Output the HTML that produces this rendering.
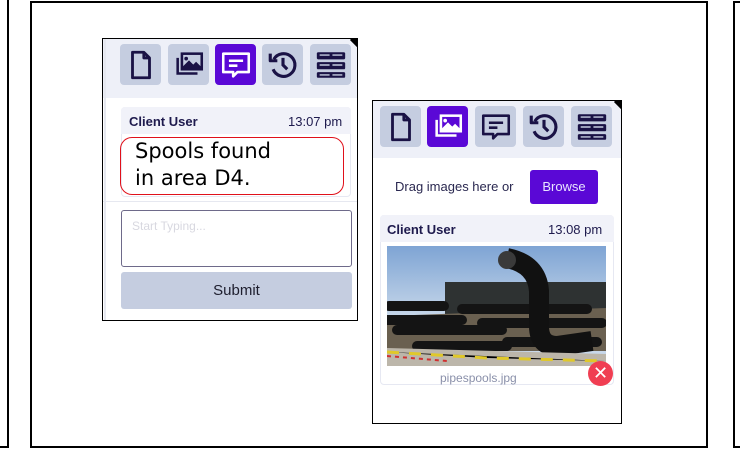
<!DOCTYPE html>
<html><head><meta charset="utf-8"><style>
*{box-sizing:border-box;margin:0;padding:0}
body{width:740px;height:450px;background:#fff;position:relative;overflow:hidden;font-family:"Liberation Sans",sans-serif}
.a{position:absolute}
.ic{position:absolute;width:41px;height:41px;border-radius:4px;background:#c5cde0;display:flex;align-items:center;justify-content:center}
.ic.on{background:#5a08d6}
.ic svg{width:34px;height:34px}
</style></head><body>
<div class="a" style="left:0;top:0;width:9px;height:448px;border-right:2px solid #000;border-bottom:2px solid #000"></div>
<div class="a" style="left:30px;top:1px;width:678px;height:447px;border:2px solid #000"></div>
<div class="a" style="left:733px;top:1px;width:20px;height:447px;border:2px solid #000"></div>

<!-- left panel -->
<div class="a" style="left:102px;top:38px;width:256px;height:283px;border:1px solid #000;background:#fff;overflow:hidden">
 <div class="a" style="left:0;top:0;width:256px;height:59px;background:#eef0f8"></div>
 <div class="a" style="left:249px;top:-4px;width:10px;height:10px;background:#000;transform:rotate(45deg)"></div>
 <div class="a" style="left:1px;top:0;width:2px;height:283px;background:#e6e8f0"></div>
</div>
<div class="ic" style="left:120px;top:44px"><svg viewBox="0 0 24 24" fill="none" stroke="#1a1245" stroke-width="2" stroke-linejoin="round"><path d="M6 3h8l4 4v14H6z"/><path d="M14 3v4h4"/></svg></div>
<div class="ic" style="left:168px;top:44px"><svg viewBox="0 0 24 24" fill="none" stroke="#1a1245" stroke-width="1.8"><rect x="7" y="4" width="14" height="11"/><path d="M4 7v11h14" /><path d="M8 14l4-4 3 3 2-2 3 3v1H8z" fill="#1a1245"/><circle cx="10" cy="7.5" r="1.3" fill="#1a1245" stroke="none"/></svg></div>
<div class="ic on" style="left:215px;top:44px"><svg viewBox="0 0 24 24" fill="none" stroke="#fff" stroke-width="1.8" stroke-linejoin="round"><path d="M3 4h18v13h-8l-3 3v-3H3z"/><path d="M7 9h10M7 12.5h6"/></svg></div>
<div class="ic" style="left:262px;top:44px"><svg viewBox="0 0 24 24" fill="none" stroke="#1a1245" stroke-width="2.2"><path d="M5.5 8A8 8 0 1 1 5 15"/><path d="M3 4v5h5" stroke-linejoin="round"/><path d="M12 7v5l3 3"/></svg></div>
<div class="ic" style="left:310px;top:44px"><svg viewBox="0 0 24 24" fill="#1a1245"><rect x="2" y="3" width="20" height="5" rx="1"/><rect x="2" y="10" width="20" height="5" rx="1"/><rect x="2" y="17" width="20" height="4" rx="1"/><path d="M4 5h7M13 5h7M4 12h7M13 12h7M4 19h7M13 19h7" stroke="#c5cde0" stroke-width="1"/></svg></div>

<div class="a" style="left:121px;top:107px;width:230px;height:90px;border:1px solid #e6e8f2;border-radius:4px;background:#fff"></div>
<div class="a" style="left:121px;top:107px;width:230px;height:27px;background:#f1f2f9;border-radius:4px 4px 0 0"></div>
<div class="a" style="left:129px;top:114px;font-size:13px;font-weight:bold;color:#1e1a4d">Client User</div>
<div class="a" style="left:288px;top:114px;font-size:13px;color:#1e1a4d">13:07 pm</div>
<div class="a" style="left:103px;top:201px;width:254px;height:1px;background:#e6e8f0"></div>
<div class="a" style="left:120px;top:137px;width:224px;height:58px;border:1px solid #e0101a;border-radius:12px"></div>
<div class="a" style="left:135px;top:138px;font-family:'DejaVu Sans',sans-serif;font-size:21px;line-height:27px;color:#000">Spools found<br>in area D4.</div>
<div class="a" style="left:121px;top:210px;width:231px;height:57px;border:1.5px solid #6e6a8a;border-radius:3px"></div>
<div class="a" style="left:132px;top:219px;font-size:12px;color:#d8d8e0">Start Typing...</div>
<div class="a" style="left:121px;top:272px;width:231px;height:37px;background:#c5cde0;border-radius:3px;text-align:center;line-height:37px;font-size:15px;color:#1e1e2e">Submit</div>

<!-- right panel -->
<div class="a" style="left:372px;top:100px;width:250px;height:324px;border:1px solid #000;background:#fff;overflow:hidden">
 <div class="a" style="left:0;top:0;width:250px;height:57px;background:#eef0f8"></div>
 <div class="a" style="left:243px;top:-4px;width:10px;height:10px;background:#000;transform:rotate(45deg)"></div>
</div>
<div class="ic" style="left:380px;top:106px"><svg viewBox="0 0 24 24" fill="none" stroke="#1a1245" stroke-width="2" stroke-linejoin="round"><path d="M6 3h8l4 4v14H6z"/><path d="M14 3v4h4"/></svg></div>
<div class="ic on" style="left:427px;top:106px"><svg viewBox="0 0 24 24" fill="none" stroke="#fff" stroke-width="1.8"><rect x="7" y="4" width="14" height="11"/><path d="M4 7v11h14"/><path d="M8 14l4-4 3 3 2-2 3 3v1H8z" fill="#fff"/><circle cx="10" cy="7.5" r="1.3" fill="#fff" stroke="none"/></svg></div>
<div class="ic" style="left:475px;top:106px"><svg viewBox="0 0 24 24" fill="none" stroke="#1a1245" stroke-width="1.8" stroke-linejoin="round"><path d="M3 4h18v13h-8l-3 3v-3H3z"/><path d="M7 9h10M7 12.5h6"/></svg></div>
<div class="ic" style="left:523px;top:106px"><svg viewBox="0 0 24 24" fill="none" stroke="#1a1245" stroke-width="2.2"><path d="M5.5 8A8 8 0 1 1 5 15"/><path d="M3 4v5h5" stroke-linejoin="round"/><path d="M12 7v5l3 3"/></svg></div>
<div class="ic" style="left:571px;top:106px"><svg viewBox="0 0 24 24" fill="#1a1245"><rect x="2" y="3" width="20" height="5" rx="1"/><rect x="2" y="10" width="20" height="5" rx="1"/><rect x="2" y="17" width="20" height="4" rx="1"/><path d="M4 5h7M13 5h7M4 12h7M13 12h7M4 19h7M13 19h7" stroke="#c5cde0" stroke-width="1"/></svg></div>

<div class="a" style="left:395px;top:179px;font-size:13px;color:#2a2850">Drag images here or</div>
<div class="a" style="left:530px;top:170px;width:68px;height:34px;background:#5a08d6;border-radius:3px;color:#e8e4ff;font-size:13px;text-align:center;line-height:34px">Browse</div>
<div class="a" style="left:380px;top:215px;width:234px;height:170px;border:1px solid #e6e8f2;border-radius:4px"></div>
<div class="a" style="left:380px;top:215px;width:234px;height:27px;background:#f1f2f9;border-radius:4px 4px 0 0"></div>
<div class="a" style="left:387px;top:222px;font-size:13px;font-weight:bold;color:#1e1a4d">Client User</div>
<div class="a" style="left:548px;top:222px;font-size:13px;color:#1e1a4d">13:08 pm</div>
<svg class="a" style="left:387px;top:246px" width="219" height="120" viewBox="0 0 219 120">
 <defs><linearGradient id="s" x1="0" y1="0" x2="0" y2="1"><stop offset="0" stop-color="#7ea4d4"/><stop offset="0.6" stop-color="#c8d8ea"/></linearGradient></defs>
 <rect width="219" height="120" fill="url(#s)"/>
 <rect x="58" y="36" width="161" height="34" fill="#2e3232"/>
 <path d="M0 70 L219 62 L219 105 L0 105Z" fill="#6a6050"/>
 <path d="M2 60h55M0 74h75M10 84h105M30 100h90M75 63h125M95 77h120M120 96h90" stroke="#141414" stroke-width="10" stroke-linecap="round"/>
 <path d="M120 12 Q150 18 152 45 L152 80 Q152 100 170 100 L205 95" stroke="#111" stroke-width="20" fill="none"/>
 <ellipse cx="120" cy="14" rx="9" ry="9" fill="#3a3a3a"/>
 <path d="M0 102 L219 108 L219 120 L0 120Z" fill="#bcb6aa"/>
 <path d="M0 106 L100 112 L219 115" stroke="#e0c82a" stroke-width="3" stroke-dasharray="12 10"/>
 <path d="M0 110 L60 115" stroke="#d03030" stroke-width="2" stroke-dasharray="4 4"/>
</svg>
<div class="a" style="left:440px;top:371px;font-size:12px;color:#8a90aa">pipespools.jpg</div>
<div class="a" style="left:588px;top:361px;width:25px;height:25px;border-radius:50%;background:#f03e52;color:#fff;font-size:18px;text-align:center;line-height:25px">✕</div>
</body></html>
